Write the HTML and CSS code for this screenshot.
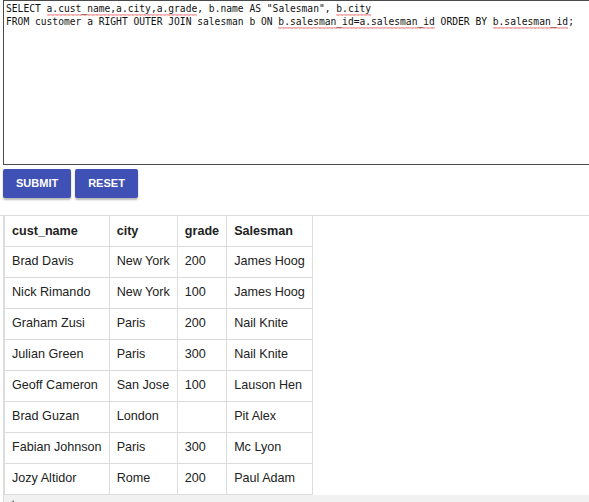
FILE: index.html
```html
<!DOCTYPE html>
<html>
<head>
<meta charset="utf-8">
<link rel="stylesheet" href="styles.css">
</head>
<body>
<div class="editor"><div class="line">SELECT <span class="sq">a.cust_name,a.city,a.grade</span>, b.name AS "Salesman", <span class="sq">b.city</span></div><div class="line">FROM customer a RIGHT OUTER JOIN salesman b ON <span class="sq">b.salesman_id=a.salesman_id</span> ORDER BY <span class="sq">b.salesman_id</span>;</div></div>
<div class="actions">
  <button class="btn">SUBMIT</button>
  <button class="btn">RESET</button>
</div>
<div class="results">
  <div class="scroller">
    <table class="grid">
      <thead>
        <tr><th>cust_name</th><th>city</th><th>grade</th><th>Salesman</th></tr>
      </thead>
      <tbody>
        <tr><td>Brad Davis</td><td>New York</td><td>200</td><td>James Hoog</td></tr>
        <tr><td>Nick Rimando</td><td>New York</td><td>100</td><td>James Hoog</td></tr>
        <tr><td>Graham Zusi</td><td>Paris</td><td>200</td><td>Nail Knite</td></tr>
        <tr><td>Julian Green</td><td>Paris</td><td>300</td><td>Nail Knite</td></tr>
        <tr><td>Geoff Cameron</td><td>San Jose</td><td>100</td><td>Lauson Hen</td></tr>
        <tr><td>Brad Guzan</td><td>London</td><td></td><td>Pit Alex</td></tr>
        <tr><td>Fabian Johnson</td><td>Paris</td><td>300</td><td>Mc Lyon</td></tr>
        <tr><td>Jozy Altidor</td><td>Rome</td><td>200</td><td>Paul Adam</td></tr>
      </tbody>
    </table>
    <div class="hscroll"><span class="arrow"></span></div>
  </div>
</div>
</body>
</html>
```
FILE: styles.css
```css
html, body {
  margin: 0;
  padding: 0;
  background: #fff;
  overflow: hidden;
}
body {
  font-family: "Liberation Sans", Arial, sans-serif;
  color: #222;
}
.editor {
  margin-left: 3px;
  width: 600px;
  height: 161px;
  border: 1px solid #4a4a4a;
  padding: 1px 2px;
  font-family: "DejaVu Sans Mono", monospace;
  font-size: 9.65px;
  line-height: 13px;
  color: #111;
  white-space: pre;
  overflow: hidden;
}
.sq {
  padding-bottom: 2px;
  background-image: url("data:image/svg+xml,%3Csvg xmlns='http://www.w3.org/2000/svg' width='4' height='2'%3E%3Cpath d='M0 1.5 L1 0.5 L2 1.5 L3 0.5 L4 1.5' fill='none' stroke='%23e02020' stroke-width='0.8'/%3E%3C/svg%3E");
  background-repeat: repeat-x;
  background-position: 0 100%;
  background-size: 4px 2px;
}
.actions {
  display: flex;
  gap: 4px;
  margin: 4px 0 0 3px;
}
.btn {
  background: #3f51b5;
  color: #fff;
  border: none;
  border-radius: 2px;
  font-family: "Liberation Sans", Arial, sans-serif;
  font-weight: bold;
  font-size: 11px;
  line-height: 13px;
  padding: 8px 13px;
  box-shadow: 0 2px 2px rgba(0,0,0,0.28);
}
.results {
  margin-top: 17px;
  border-top: 1px solid #dcdcdc;
}
.scroller {
  margin-left: 3px;
  border-left: 1px solid #dcdcdc;
}
.grid {
  border-collapse: collapse;
  font-size: 12.6px;
  line-height: 15px;
}
.grid th, .grid td {
  border: 1px solid #dcdcdc;
  padding: 7px 7px 8px 7px;
  text-align: left;
  white-space: nowrap;
}
.grid th {
  font-weight: bold;
  color: #222;
  border-top: none;
  padding-top: 8px;
  padding-bottom: 7px;
}
.hscroll {
  height: 17px;
  background: #f1f1f1;
  position: relative;
}
.arrow {
  position: absolute;
  left: 6px;
  top: 5px;
  width: 0;
  height: 0;
  border-top: 3px solid transparent;
  border-bottom: 3px solid transparent;
  border-right: 4px solid #7a7a7a;
}
```
